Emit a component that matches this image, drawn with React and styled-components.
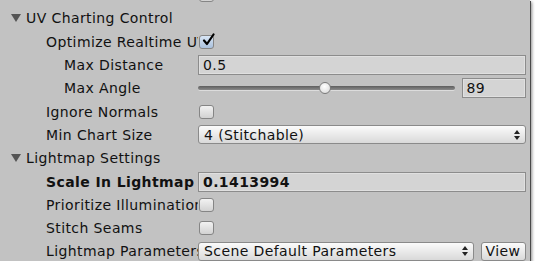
import styled, { createGlobalStyle } from 'styled-components';

const GlobalStyle = createGlobalStyle`
  html, body {
    margin: 0;
    padding: 0;
    background: #ffffff;
  }
  body {
    font-family: "DejaVu Sans", Verdana, sans-serif;
    font-size: 14px;
    letter-spacing: 0.4px;
    color: #111;
  }
`;

const ArrowsIcon = () => (
  <svg width='6' height='10' viewBox='0 0 6 10'>
    <path d='M0 4 L3 0 L6 4 Z M0 6 L3 10 L6 6 Z' fill='#222' />
  </svg>
);

const Checkbox = ({ checked }) => (
  <Box $checked={checked}>
    {checked && (
      <svg width='15' height='15' viewBox='0 0 15 15'>
        <path d='M3 7.5 L6 11 L12.5 1.5' fill='none' stroke='#000' strokeWidth='2.2' strokeLinecap='round' strokeLinejoin='round' />
      </svg>
    )}
  </Box>
);

const Popup = ({ children }) => (
  <PopupBox>
    <PopupText>{children}</PopupText>
    <ArrowsIcon />
  </PopupBox>
);

const Foldout = ({ children }) => (
  <Row>
    <Triangle />
    <FoldoutLabel>{children}</FoldoutLabel>
  </Row>
);

export default function App() {
  const angle = 89,
    maxAngle = 180;

  return (
    <>
      <GlobalStyle />
      <Panel>
        <Row $partial>
          <Label $indent={46}>Preserve UVs</Label>
          <Checkbox />
        </Row>

        <Foldout>UV Charting Control</Foldout>
        <Row>
          <Label $indent={46}>Optimize Realtime UVs</Label>
          <Checkbox checked />
        </Row>
        <Row>
          <Label $indent={64}>Max Distance</Label>
          <Field>0.5</Field>
        </Row>
        <Row>
          <Label $indent={64}>Max Angle</Label>
          <Slider>
            <Track />
            <Thumb style={{ left: `${(angle / maxAngle) * 100}%` }} />
          </Slider>
          <NumberField>{angle}</NumberField>
        </Row>
        <Row>
          <Label $indent={46}>Ignore Normals</Label>
          <Checkbox />
        </Row>
        <Row>
          <Label $indent={46}>Min Chart Size</Label>
          <Popup>4 (Stitchable)</Popup>
        </Row>

        <Foldout>Lightmap Settings</Foldout>
        <Row>
          <Label $indent={46} $bold>Scale In Lightmap</Label>
          <Field $bold>0.1413994</Field>
        </Row>
        <Row>
          <Label $indent={46}>Prioritize Illumination</Label>
          <Checkbox />
        </Row>
        <Row>
          <Label $indent={46}>Stitch Seams</Label>
          <Checkbox />
        </Row>
        <Row>
          <Label $indent={46}>Lightmap Parameters</Label>
          <Popup>Scene Default Parameters</Popup>
          <Button>View</Button>
        </Row>
      </Panel>
    </>
  );
}

const Panel = styled.div`
  width: 530px;
  height: 261px;
  overflow: hidden;
  background: #c2c2c2;
  display: flex;
  flex-direction: column;
  padding-top: 2.5px;
  box-sizing: border-box;
  box-shadow: 1px 1px 0 #4a4a4a, 2px 2px 3px rgba(0, 0, 0, 0.45);
`;

const Row = styled.div`
  flex: none;
  height: 23.3px;
  display: flex;
  align-items: center;
  padding-right: 4.5px;
  ${(p) => p.$partial && 'margin-top: -19px;'}
`;

const Label = styled.div`
  flex: none;
  margin-left: ${(p) => p.$indent}px;
  width: ${(p) => 198 - p.$indent}px;
  white-space: nowrap;
  overflow: hidden;
  font-weight: ${(p) => (p.$bold ? 700 : 400)};
`;

const Triangle = styled.span`
  flex: none;
  margin-left: 11px;
  width: 0;
  height: 0;
  border-left: 5px solid transparent;
  border-right: 5px solid transparent;
  border-top: 8px solid #555;
`;

const FoldoutLabel = styled.span`
  margin-left: 5px;
  white-space: nowrap;
`;

const Box = styled.span`
  flex: none;
  margin-left: 1px;
  width: 15px;
  height: 14px;
  box-sizing: border-box;
  border: 1px solid #858585;
  border-radius: 3px;
  background: ${(p) =>
    p.$checked ? 'linear-gradient(#d9e6f5, #a9c0dc)' : 'linear-gradient(#f2f2f2, #d2d2d2)'};
  display: flex;
  align-items: center;
  justify-content: center;

  svg {
    margin-top: -3px;
    margin-right: -3px;
  }
`;

const Field = styled.div`
  flex: 1;
  height: 20px;
  box-sizing: border-box;
  border: 1px solid #8c8c8c;
  box-shadow: inset 0 0 0 1px #e0e0e0;
  background: #d4d4d4;
  padding: 0 4px;
  display: flex;
  align-items: center;
  font-weight: ${(p) => (p.$bold ? 700 : 400)};
`;

const NumberField = styled(Field)`
  flex: none;
  width: 64px;
  margin-left: 7px;
`;

const Slider = styled.div`
  position: relative;
  flex: 1;
  height: 14px;
  display: flex;
  align-items: center;
`;

const Track = styled.div`
  flex: 1;
  height: 4px;
  border-radius: 2px;
  background: linear-gradient(#5e5e5e, #8a8a8a);
  box-shadow: 0 1px 0 #dcdcdc;
`;

const Thumb = styled.div`
  position: absolute;
  top: 1px;
  width: 12px;
  height: 12px;
  margin-left: -6px;
  box-sizing: border-box;
  border-radius: 50%;
  border: 1px solid #7a7a7a;
  background: radial-gradient(circle at 45% 35%, #ffffff, #d6d6d6);
`;

const PopupBox = styled.div`
  flex: 1;
  min-width: 0;
  height: 19px;
  box-sizing: border-box;
  border: 1px solid #8a8a8a;
  border-radius: 3px;
  background: linear-gradient(#fbfbfb, #d9d9d9);
  display: flex;
  align-items: center;
  padding: 0 5px 0 5px;
`;

const PopupText = styled.span`
  flex: 1;
  white-space: nowrap;
  overflow: hidden;
`;

const Button = styled.div`
  flex: none;
  margin-left: 7px;
  width: 45px;
  height: 19px;
  box-sizing: border-box;
  border: 1px solid #8a8a8a;
  border-radius: 3px;
  background: linear-gradient(#fbfbfb, #d9d9d9);
  display: flex;
  align-items: center;
  justify-content: center;
`;
